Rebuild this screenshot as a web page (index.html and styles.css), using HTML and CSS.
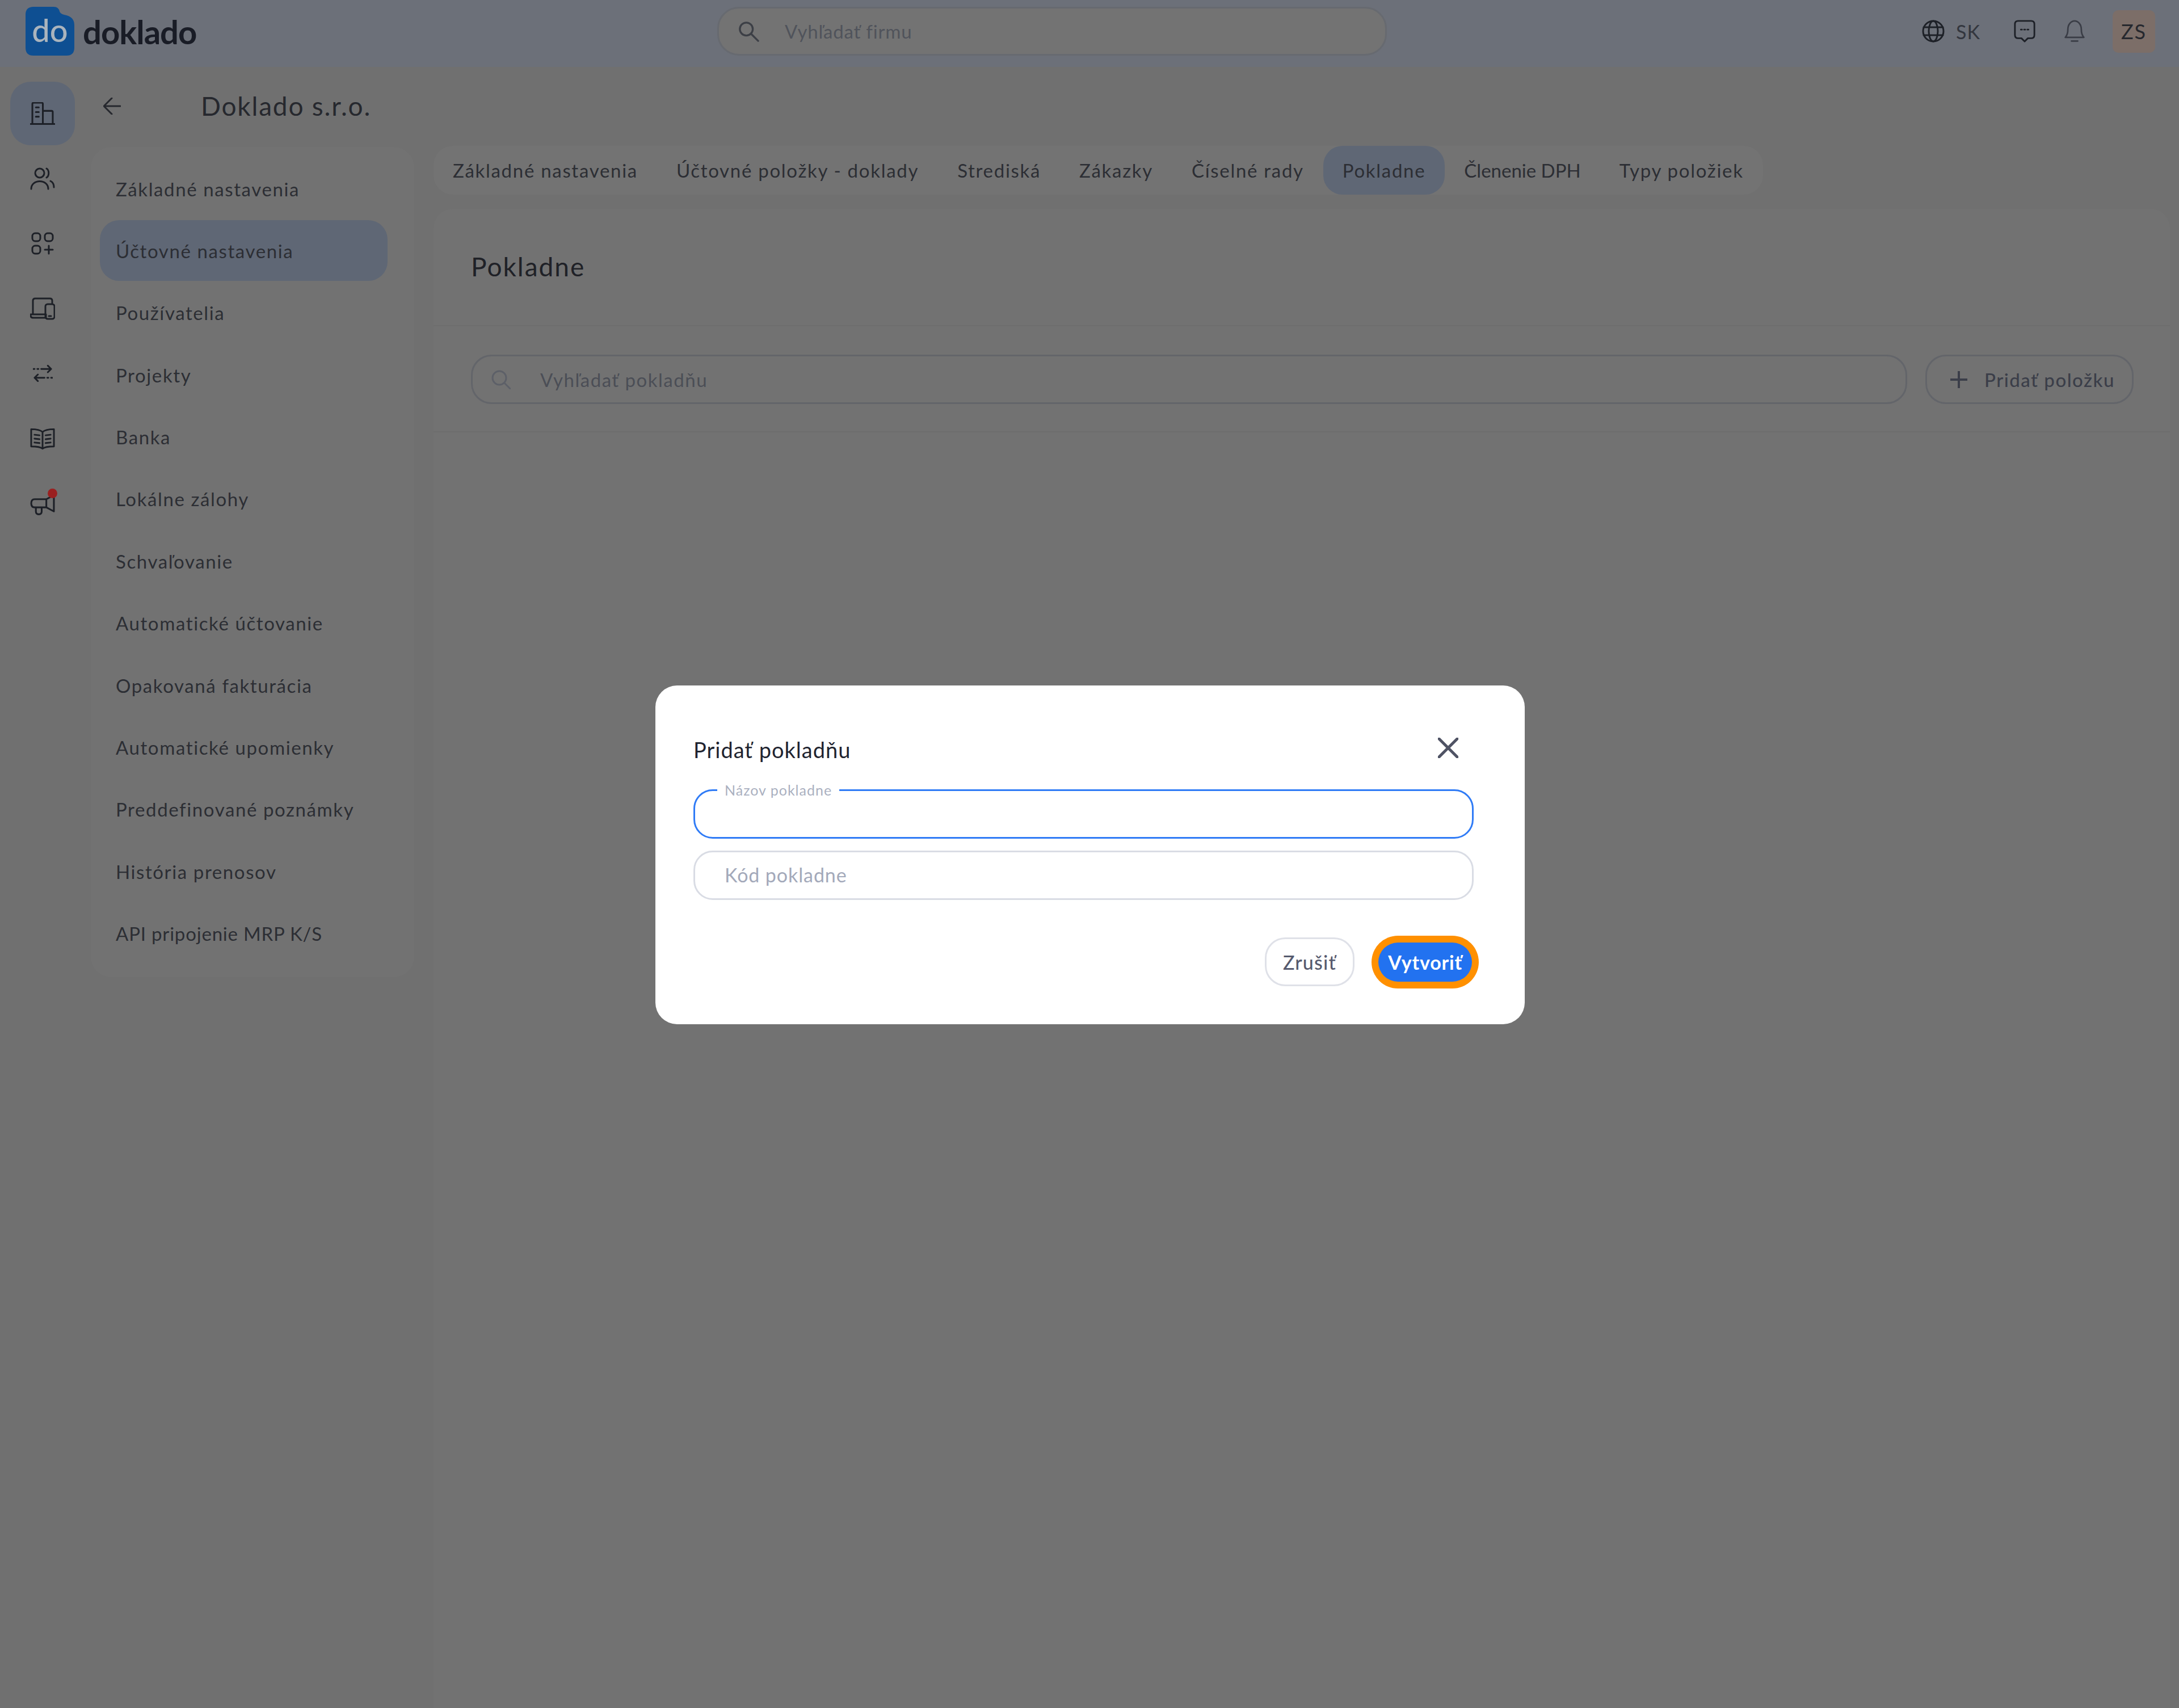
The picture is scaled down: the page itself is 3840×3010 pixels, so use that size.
FILE: index.html
```html
<!DOCTYPE html>
<html lang="sk">
<head>
  <meta charset="UTF-8">
  <meta name="viewport" content="width=device-width, initial-scale=1.0">
  <title>Doklado - Pokladne</title>
  <link rel="stylesheet" href="styles.css">
</head>
<body>
  <header class="topbar">
    <div class="brand">
      <svg class="brand-mark" viewBox="0 0 86 86">
        <path fill="#0e4f92" d="M14 0H50Q58 0 60 8Q61 12 68 14Q86 17 86 32V72Q86 86 72 86H14Q0 86 0 72V14Q0 0 14 0Z"/>
        <text x="43" y="62" text-anchor="middle" class="brand-do">do</text>
      </svg>
      <span class="brand-name">doklado</span>
    </div>
    <div class="top-search">
      <svg class="top-search-icon" viewBox="0 0 40 40"><circle cx="16" cy="16" r="12"/><path d="M25 25 38 38"/></svg>
      <span>Vyhľadať firmu</span>
    </div>
    <div class="top-actions">
      <svg class="top-icon globe" viewBox="0 0 40 40"><circle cx="20" cy="20" r="18"/><ellipse cx="20" cy="20" rx="8" ry="18"/><path d="M3 13H37M3 27H37"/></svg>
      <span class="lang">SK</span>
      <svg class="top-icon chat" viewBox="0 0 40 42"><path d="M8 2H32Q38 2 38 8V28Q38 34 32 34H26L20 40 14 34H8Q2 34 2 28V8Q2 2 8 2Z"/><path d="M13 18H15M19 18H21M25 18H27"/></svg>
      <svg class="top-icon bell" viewBox="0 0 40 44"><path d="M2 34C6 30 7 26 7 18C7 9 13 2 20 2S33 9 33 18C33 26 34 30 38 34Z"/><path d="M14 41H26"/></svg>
      <div class="avatar">ZS</div>
    </div>
  </header>

  <div class="layout">
    <nav class="rail">
      <a class="rail-item active">
        <svg class="rail-icon" viewBox="0 0 41 39"><path d="M3 37V3Q3 1 5 1H19Q21 1 21 3V37M21 15H36Q38 15 38 17V37M0 37.500H41M9 9H14M9 17H14M9 25H14"/></svg>
      </a>
      <a class="rail-item">
        <svg class="rail-icon" viewBox="0 0 44 40"><circle cx="17" cy="10" r="8"/><path d="M29 2C34 5 34 15 29 18M2 38C2 20 32 20 32 38M36 24C40 26 42 30 42 35"/></svg>
      </a>
      <a class="rail-item">
        <svg class="rail-icon" viewBox="0 0 40 40"><rect x="2" y="2" width="14" height="14" rx="5"/><rect x="24" y="2" width="14" height="14" rx="5"/><rect x="2" y="24" width="14" height="14" rx="5"/><path d="M31 24V38M24 31H38"/></svg>
      </a>
      <a class="rail-item">
        <svg class="rail-icon" viewBox="0 0 44 40"><path d="M5 28V6Q5 2 9 2H35Q39 2 39 6V10M1 30H28V36H6Q1 36 1 32Z"/><rect x="27" y="12" width="16" height="26" rx="4"/><path d="M33 33H37"/></svg>
      </a>
      <a class="rail-item">
        <svg class="rail-icon arrows" viewBox="0 0 36 30"><path d="M1 7H3M8 7H10M15 7H33M27 1 33 7 27 13M35 23H33M28 23H26M21 23H3M9 17 3 23 9 29"/></svg>
      </a>
      <a class="rail-item">
        <svg class="rail-icon" viewBox="0 0 45 38"><path d="M22.500 7C18 3 9 2 2 2V33C9 33 18 33 22.500 37C27 33 36 33 43 33V2C36 2 27 3 22.500 7ZM22.500 7V37M8 12 17 13M8 19 17 20M8 26 17 27M28 13 37 12M28 20 37 19M28 27 37 26"/></svg>
      </a>
      <a class="rail-item">
        <svg class="rail-icon megaphone" viewBox="0 0 43 36"><path d="M28 8H8Q2 8 2 15Q2 22 8 22H28ZM28 8 41 1V29L28 22M10 22V29Q10 34 15 34Q20 34 20 29V22"/></svg>
        <span class="rail-dot"></span>
      </a>
    </nav>

    <div class="content">
      <div class="page-head">
        <svg class="back-icon" viewBox="0 0 31 30"><path d="M30 15H2M15 1 1 15 15 29"/></svg>
        <h1>Doklado s.r.o.</h1>
      </div>
      <div class="columns">
        <aside class="side-menu">
          <a class="side-item">Základné nastavenia</a>
          <a class="side-item active">Účtovné nastavenia</a>
          <a class="side-item">Používatelia</a>
          <a class="side-item">Projekty</a>
          <a class="side-item">Banka</a>
          <a class="side-item">Lokálne zálohy</a>
          <a class="side-item">Schvaľovanie</a>
          <a class="side-item">Automatické účtovanie</a>
          <a class="side-item">Opakovaná fakturácia</a>
          <a class="side-item">Automatické upomienky</a>
          <a class="side-item">Preddefinované poznámky</a>
          <a class="side-item">História prenosov</a>
          <a class="side-item tight">API pripojenie MRP K/S</a>
        </aside>

        <main class="main">
          <div class="tabs">
            <a class="tab">Základné nastavenia</a>
            <a class="tab">Účtovné položky - doklady</a>
            <a class="tab">Strediská</a>
            <a class="tab">Zákazky</a>
            <a class="tab">Číselné rady</a>
            <a class="tab active">Pokladne</a>
            <a class="tab tight">Členenie DPH</a>
            <a class="tab">Typy položiek</a>
          </div>
          <section class="panel">
            <h2 class="panel-title">Pokladne</h2>
            <div class="panel-tools">
              <div class="panel-search">
                <svg class="panel-search-icon" viewBox="0 0 34 34"><circle cx="14" cy="14" r="12"/><path d="M23 23 33 33"/></svg>
                <span>Vyhľadať pokladňu</span>
              </div>
              <button class="add-btn">
                <svg class="add-icon" viewBox="0 0 30 30"><path d="M15 0V30M0 15H30"/></svg>
                Pridať položku
              </button>
            </div>
          </section>
        </main>
      </div>
    </div>
  </div>

  <div class="backdrop">
    <div class="modal">
      <div class="modal-head">
        <h3>Pridať pokladňu</h3>
        <svg class="close-icon" viewBox="0 0 36 36"><path d="M2 2 34 34M34 2 2 34"/></svg>
      </div>
      <div class="field focused">
        <label>Názov pokladne</label>
      </div>
      <div class="field">
        <span class="field-placeholder">Kód pokladne</span>
      </div>
      <div class="modal-actions">
        <button class="btn-cancel">Zrušiť</button>
        <button class="btn-create">Vytvoriť</button>
      </div>
    </div>
  </div>
</body>
</html>
```

FILE: styles.css
```css
* {
  margin: 0;
  padding: 0;
  box-sizing: border-box;
}

body {
  font-family: 'Lato', 'Noto Sans', sans-serif;
  background: #707070;
  color: #24262c;
  width: 3840px;
  height: 3010px;
  overflow: hidden;
}

svg {
  fill: none;
  stroke-linecap: round;
  stroke-linejoin: round;
  flex-shrink: 0;
}

/* top bar */
.topbar {
  height: 118px;
  background: #6c7079;
  display: flex;
  align-items: center;
  padding: 0 42px 8px 45px;
}

.brand {
  width: 1219px;
  display: flex;
  align-items: center;
  gap: 15px;
}

.brand-mark {
  width: 86px;
  height: 86px;
}

.brand-do {
  font-family: 'Lato', sans-serif;
  font-size: 56px;
  font-weight: 500;
  fill: #aab4bd;
}

.brand-name {
  font-size: 58px;
  font-weight: 700;
  color: #191c26;
  letter-spacing: -1px;
}

.top-search {
  width: 1180px;
  height: 86px;
  border: 3px solid #676a70;
  border-radius: 38px;
  background: #737373;
  display: flex;
  align-items: center;
  padding-left: 33px;
  gap: 45px;
  font-size: 33px;
  letter-spacing: 0.800px;
  color: #50535b;
}

.top-search-icon {
  width: 38px;
  height: 38px;
  stroke: #3c3f46;
  stroke-width: 3.500;
}

.top-actions {
  flex: 1;
  display: flex;
  align-items: center;
  justify-content: flex-end;
}

.top-icon {
  width: 40px;
  height: 40px;
  stroke: #1d2027;
  stroke-width: 3;
}

.lang {
  margin-left: 20px;
  width: 101px;
  font-size: 34px;
  letter-spacing: 1px;
  color: #33363e;
}

.bell {
  margin-left: 48px;
  stroke: #3a3d46;
}

.avatar {
  width: 75px;
  height: 75px;
  margin-left: 47px;
  border-radius: 10px;
  background: #7c6e68;
  display: flex;
  align-items: center;
  justify-content: center;
  font-size: 36px;
  letter-spacing: 2px;
  color: #26282e;
}

/* left rail */
.layout {
  display: flex;
}

.rail {
  width: 160px;
  padding: 26px 28px 0 18px;
  display: flex;
  flex-direction: column;
  gap: 2.500px;
}

.rail-item {
  position: relative;
  height: 112px;
  border-radius: 36px;
  display: flex;
  align-items: center;
  justify-content: center;
}

.rail-item.active {
  background: #5f6775;
}

.rail-icon {
  width: 44px;
  height: 40px;
  stroke: #1d2027;
  stroke-width: 3;
}

.rail-icon.arrows {
  width: 35px;
  height: 30px;
}

.rail-icon.megaphone {
  margin-top: 6px;
}

.rail-dot {
  position: absolute;
  left: 66px;
  top: 30px;
  width: 17px;
  height: 17px;
  border-radius: 50%;
  background: #9a2020;
}

/* content */
.content {
  flex: 1;
}

.page-head {
  height: 141px;
  display: flex;
  align-items: center;
  padding: 0 0 4px 22px;
}

.back-icon {
  width: 31px;
  height: 30px;
  stroke: #26282e;
  stroke-width: 3;
}

.page-head h1 {
  margin-left: 141px;
  font-size: 46px;
  font-weight: 400;
  letter-spacing: 1.800px;
  color: #26282e;
}

.columns {
  display: flex;
}

.side-menu {
  width: 570px;
  height: 1463px;
  padding: 20px 47px 0 16px;
  border-radius: 36px;
  background: #727272;
  display: flex;
  flex-direction: column;
  gap: 2.400px;
}

.side-item {
  height: 107px;
  flex-shrink: 0;
  padding-left: 28px;
  border-radius: 34px;
  display: flex;
  align-items: center;
  font-size: 33px;
  letter-spacing: 1.600px;
  color: #2c2e34;
}

.side-item.active {
  background: #5f6775;
}

.side-item.tight {
  letter-spacing: 0.800px;
}

.main {
  margin-left: 34px;
  width: 3060px;
}

.tabs {
  width: max-content;
  height: 86px;
  margin-top: -2px;
  border-radius: 34px;
  background: #737373;
  display: flex;
}

.tab {
  padding: 0 34px;
  border-radius: 34px;
  display: flex;
  align-items: center;
  font-size: 33px;
  letter-spacing: 1.700px;
  color: #2c2e34;
}

.tab.active {
  background: #5f6775;
}

.tab.tight {
  letter-spacing: 0;
}

.panel {
  margin-top: 25px;
  height: 2642px;
  background: #727272;
  border-radius: 34px 34px 0 0;
}

.panel-title {
  height: 207px;
  padding: 74px 0 0 66px;
  border-bottom: 2px solid #6d6d6d;
  font-size: 46px;
  font-weight: 400;
  letter-spacing: 2px;
  color: #1f2127;
}

.panel-tools {
  height: 187px;
  padding: 50px 64px 0 66px;
  border-bottom: 2px solid #6d6d6d;
  display: flex;
  gap: 32px;
}

.panel-search {
  flex: 1;
  height: 87px;
  border: 3px solid #63656a;
  border-radius: 36px;
  display: flex;
  align-items: center;
  padding-left: 33px;
  gap: 52px;
  font-size: 33px;
  letter-spacing: 1.500px;
  color: #4b4e56;
}

.panel-search-icon {
  width: 34px;
  height: 34px;
  stroke: #5d6068;
  stroke-width: 3;
}

.add-btn {
  width: 367px;
  height: 87px;
  border: 3px solid #63656a;
  border-radius: 36px;
  background: transparent;
  display: flex;
  align-items: center;
  padding-left: 41px;
  gap: 30px;
  font-family: inherit;
  font-size: 33px;
  font-weight: 500;
  letter-spacing: 1.500px;
  color: #3b3e49;
}

.add-icon {
  width: 30px;
  height: 30px;
  stroke: #3b3e49;
  stroke-width: 4;
}

/* modal */
.backdrop {
  position: fixed;
  inset: 0;
  padding: 3px 0 0 2px;
  display: flex;
  align-items: center;
  justify-content: center;
}

.modal {
  width: 1532px;
  height: 597px;
  padding: 0 90px 0 67px;
  background: #fff;
  border-radius: 38px;
}

.modal-head {
  height: 183px;
  padding-top: 90px;
  display: flex;
  justify-content: space-between;
}

.modal-head h3 {
  font-size: 38px;
  font-weight: 400;
  letter-spacing: 1px;
  color: #1f2430;
}

.close-icon {
  width: 36px;
  height: 36px;
  margin: 2px 27px 0 0;
  stroke: #4f5364;
  stroke-width: 5;
}

.field {
  position: relative;
  height: 87px;
  margin-bottom: 21px;
  border: 3px solid #d9dce4;
  border-radius: 34px;
  display: flex;
  align-items: center;
  padding-left: 52px;
}

.field.focused {
  border-color: #2f7bf6;
}

.field label {
  position: absolute;
  left: 39px;
  top: -16px;
  padding: 0 13px;
  background: #fff;
  font-size: 25px;
  line-height: 28px;
  letter-spacing: 1px;
  color: #aab0c0;
}

.field-placeholder {
  margin-top: -3px;
  font-size: 34px;
  letter-spacing: 0.900px;
  color: #a3a9ba;
}

.modal-actions {
  margin-top: 66px;
  padding-right: 3px;
  display: flex;
  justify-content: flex-end;
  align-items: center;
  gap: 42px;
}

.modal-actions button {
  font-family: inherit;
  font-size: 34px;
  border-radius: 36px;
}

.btn-cancel {
  width: 158px;
  height: 86px;
  border: 3px solid #dfe1e8;
  background: #fff;
  font-weight: 500;
  letter-spacing: 1.200px;
  color: #565a6e;
}

.btn-create {
  width: 165px;
  height: 69px;
  border: none;
  background: #2272f0;
  box-shadow: 0 0 0 12px #ff9000;
  font-weight: 700;
  letter-spacing: 0.800px;
  color: #fff;
}
```
